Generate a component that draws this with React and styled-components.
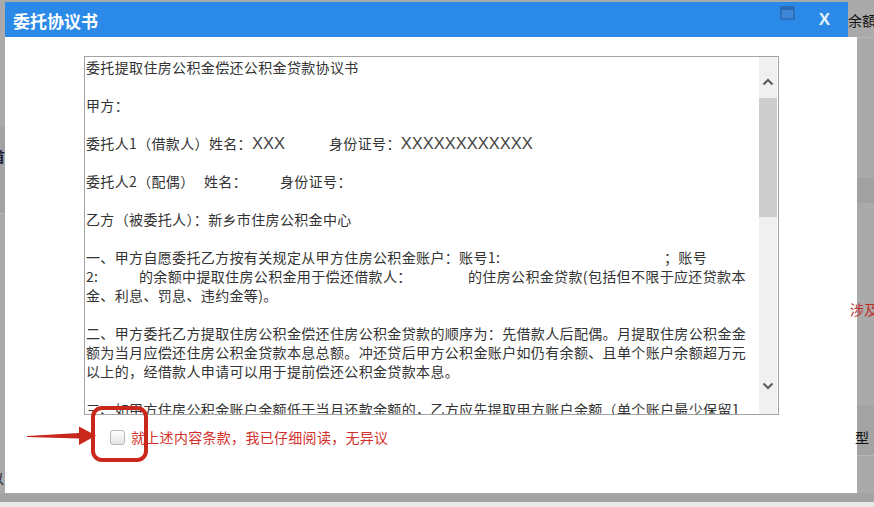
import React from 'react';
import styled, { createGlobalStyle } from 'styled-components';

const GlobalStyle = createGlobalStyle`
  html, body {
    margin: 0;
    padding: 0;
  }
  body {
    width: 874px;
    height: 507px;
    overflow: hidden;
    font-family: "Noto Sans CJK SC", "Noto Sans", sans-serif;
  }
`;

const Screen = styled.div`
  width: 874px;
  height: 507px;
  display: flex;
  flex-direction: column;
  background: #aaaaaa;
  overflow: hidden;
`;

const Stage = styled.div`
  height: 493px;
  display: flex;
`;

const BottomBand = styled.div`
  height: 9px;
  background: #a4a4a4;
`;

const BottomEdge = styled.div`
  flex: 1;
  background: #e9e9e9;
`;

// strips of the dimmed page that show around the dialog
const Strip = styled.div`
  width: ${(p) => p.$w}px;
  flex-shrink: 0;
  display: flex;
  flex-direction: column;
  position: relative;
  z-index: 1;
`;

const Band = styled.div`
  height: ${(p) => p.$h}px;
  box-sizing: border-box;
  background: ${(p) => p.$bg || 'transparent'};
  border-top: ${(p) => (p.$line ? '1px solid #b8b8b8' : 'none')};
  display: flex;
  align-items: ${(p) => (p.$pad ? 'flex-start' : 'center')};
  padding-top: ${(p) => p.$pad || 0}px;
  white-space: nowrap;
  overflow: visible;
`;

const PageText = styled.span`
  font-size: 14px;
  line-height: 18px;
  color: ${(p) => p.$color || '#111'};
  margin-left: ${(p) => p.$shift || 0}px;
  font-weight: ${(p) => (p.$bold ? 700 : 400)};
`;

const Modal = styled.div`
  width: 852px;
  flex-shrink: 0;
  margin-top: 2px;
  display: flex;
  flex-direction: column;
`;

const TitleBar = styled.div`
  height: 35px;
  margin-right: 9px;
  background: #2b8ae8;
  display: flex;
  align-items: center;
  padding: 0 18px 0 8px;
`;

const Title = styled.h1`
  margin: 0;
  font-size: 17px;
  font-weight: 700;
  color: #fff;
  margin-top: 2px;
  letter-spacing: 0;
`;

const Controls = styled.div`
  margin-left: auto;
  display: flex;
  align-items: flex-start;
  align-self: stretch;
  gap: 24px;
`;

const MinButton = styled.div`
  margin-top: 4px;
  width: 15px;
  height: 14px;
  display: flex;
`;

const CloseButton = styled.div`
  margin-top: 9px;
  font-family: "Liberation Sans", Arial, sans-serif;
  font-size: 17px;
  font-weight: 700;
  color: #e6f0fb;
  line-height: 17px;
`;

const Body = styled.div`
  flex: 1;
  background: #fff;
  position: relative;
  padding: 19px 0 0 79px;
`;

const TextBox = styled.div`
  width: 695px;
  height: 359px;
  box-sizing: border-box;
  border: 1px solid #a3a3a3;
  display: flex;
`;

const Content = styled.div`
  flex: 1;
  overflow: hidden;
  padding: 0.5px 0 0 1px;
  font-size: 14px;
  line-height: 19px;
  letter-spacing: 0.35px;
  color: #333;
`;

const Para = styled.p`
  margin: 0 0 19px;
  white-space: nowrap;
`;

const Line = styled.div`
  height: 19px;
`;

const Cell = styled.span`
  display: inline-block;
  width: ${(p) => p.$w}px;
`;

const Big = styled.span`
  font-family: "Liberation Sans", Arial, sans-serif;
  font-size: 16.5px;
  letter-spacing: 0;
  color: #444;
`;

const Scrollbar = styled.div`
  width: 18px;
  margin-right: 1px;
  background: #f0f0f0;
  display: flex;
  flex-direction: column;
`;

const ArrowBtn = styled.div`
  height: ${(p) => p.$h}px;
  display: flex;
  justify-content: center;
  align-items: flex-start;
  padding-top: ${(p) => p.$top}px;
  box-sizing: border-box;
`;

const Thumb = styled.div`
  height: 119px;
  background: #cdcdcd;
`;

const Spacer = styled.div`
  flex: 1;
`;

const Footer = styled.div`
  margin: 14px 0 0 26px;
  height: 16px;
  display: flex;
  align-items: center;
`;

const CheckBox = styled.span`
  width: 13px;
  height: 13px;
  border: 1px solid #b9b9b9;
  border-radius: 3px;
  background: linear-gradient(#ffffff, #e4e4e4);
  flex-shrink: 0;
`;

const Agree = styled.span`
  margin-left: 6px;
  font-size: 14px;
  letter-spacing: 0.3px;
  color: #d2302a;
`;

// red annotation drawn over the screenshot
const Highlight = styled.div`
  position: absolute;
  left: 86px;
  top: 369px;
  width: 57px;
  height: 56px;
  box-sizing: border-box;
  border: 4px solid #c9261c;
  border-radius: 11px;
`;

const Arrow = styled.svg`
  position: absolute;
  left: 22px;
  top: 388px;
`;

const Chevron = ({ up }) => (
  <svg width="12" height="8" viewBox="0 0 12 8">
    <polyline
      points={up ? '1.5,6.5 6,2 10.5,6.5' : '1.5,1.5 6,6 10.5,1.5'}
      fill="none"
      stroke="#5a5a5a"
      strokeWidth="2"
    />
  </svg>
);

const App = () => (
  <>
    <GlobalStyle />
    <Screen>
      <Stage>
        <Strip $w={5}>
          <Band $h={127} />
          <Band $h={86} $bg="#a2a2a2" $pad={20}>
            <PageText $shift={-9} $color="#1b1f3a" $bold>首</PageText>
          </Band>
          <Band $h={250} $line />
          <Band $h={30}>
            <PageText $shift={-10} $color="#222">以</PageText>
          </Band>
        </Strip>

        <Modal>
          <TitleBar>
            <Title>委托协议书</Title>
            <Controls>
              <MinButton>
                <svg width="15" height="14" viewBox="0 0 15 14">
                  <rect x="1" y="1" width="13" height="12" fill="#3f87d6" stroke="#2a69b4" strokeWidth="1.6" />
                  <rect x="1" y="1" width="13" height="3" fill="#2a69b4" />
                </svg>
              </MinButton>
              <CloseButton>X</CloseButton>
            </Controls>
          </TitleBar>

          <Body>
            <TextBox>
              <Content>
                <Para>委托提取住房公积金偿还公积金贷款协议书</Para>
                <Para>甲方：</Para>
                <Para>
                  <Cell $w={243}>
                    委托人1（借款人）姓名：<Big>XXX</Big>
                  </Cell>
                  身份证号：<Big>XXXXXXXXXXXX</Big>
                </Para>
                <Para>
                  <Cell $w={118}>委托人2（配偶）</Cell>
                  <Cell $w={76}>姓名：</Cell>
                  身份证号：
                </Para>
                <Para>乙方（被委托人）：新乡市住房公积金中心</Para>
                <Para>
                  <Line>
                    <Cell $w={578}>一、甲方自愿委托乙方按有关规定从甲方住房公积金账户：账号1:</Cell>
                    ；账号
                  </Line>
                  <Line>
                    <Cell $w={53}>2:</Cell>
                    <Cell $w={329}>的余额中提取住房公积金用于偿还借款人：</Cell>
                    的住房公积金贷款(包括但不限于应还贷款本
                  </Line>
                  <Line>金、利息、罚息、违约金等)。</Line>
                </Para>
                <Para>
                  <Line>二、甲方委托乙方提取住房公积金偿还住房公积金贷款的顺序为：先借款人后配偶。月提取住房公积金金</Line>
                  <Line>额为当月应偿还住房公积金贷款本息总额。冲还贷后甲方公积金账户如仍有余额、且单个账户余额超万元</Line>
                  <Line>以上的，经借款人申请可以用于提前偿还公积金贷款本息。</Line>
                </Para>
                <Para>
                  <Line>三、如甲方住房公积金账户余额低于当月还款余额的，乙方应先提取甲方账户余额（单个账户最少保留1</Line>
                  <Line>元），不足部分由乙方从借款人的还款账户中扣收。</Line>
                </Para>
              </Content>
              <Scrollbar>
                <ArrowBtn $h={41} $top={21}>
                  <Chevron up />
                </ArrowBtn>
                <Thumb />
                <Spacer />
                <ArrowBtn $h={40} $top={8}>
                  <Chevron />
                </ArrowBtn>
              </Scrollbar>
            </TextBox>

            <Footer>
              <CheckBox />
              <Agree>就上述内容条款，我已仔细阅读，无异议</Agree>
            </Footer>

            <Highlight />
            <Arrow width="72" height="22" viewBox="0 0 72 22">
              <polygon points="0,11 52,8 52,1.5 69,10.5 52,20 52,13.5 0,12" fill="#c9261c" />
            </Arrow>
          </Body>
        </Modal>

        <Strip $w={17}>
          <Band $h={37} $pad={11}>
            <PageText $shift={-9}>余額</PageText>
          </Band>
          <Band $h={141} $line />
          <Band $h={25} $bg="#a1a1a1" />
          <Band $h={95} />
          <Band $h={22}>
            <PageText $shift={-7} $color="#c0302a">涉及</PageText>
          </Band>
          <Band $h={85} />
          <Band $h={50} $bg="#a3a3a3" $pad={23}>
            <PageText $shift={-2}>型</PageText>
          </Band>
          <Band $h={38} $line />
        </Strip>
      </Stage>
      <BottomBand />
      <BottomEdge />
    </Screen>
  </>
);

export default App;
